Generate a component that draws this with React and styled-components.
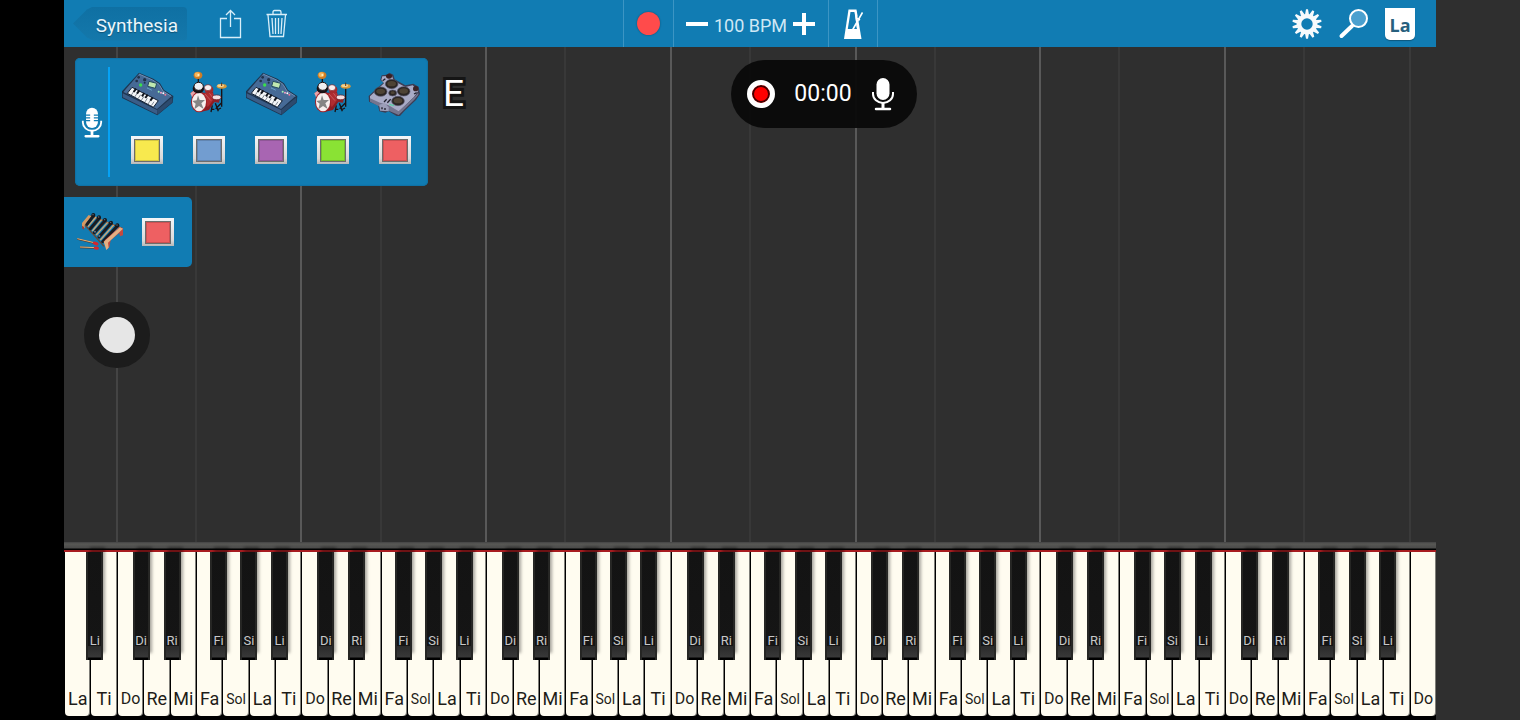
import React from 'react'
import styled, {createGlobalStyle} from 'styled-components'

const GlobalStyle = createGlobalStyle`
    * {
        box-sizing: border-box;
    }
    body {
        margin: 0;
        background: #2f2f2f;
        font-family: Roboto, "Liberation Sans", sans-serif;
    }
    button {
        margin: 0;
        padding: 0;
        border: 0;
        background: none;
        color: inherit;
        font: inherit;
        cursor: pointer;
    }
    svg {
        display: block;
    }
`

const Page = styled.div`
    min-height: 100vh;
    display: grid;
    grid-template-columns: 64px 1fr 84px;
    background: #2f2f2f;
    position: relative;
`
const Gutter = styled.div`
    background: #000;
`
const Screen = styled.main`
    min-width: 0;
    display: flex;
    flex-direction: column;
`

// top bar

const Toolbar = styled.header`
    height: 47px;
    display: grid;
    grid-template-columns: 1fr auto 1fr;
    background: #117cb3;
    color: #fff;
`
const Left = styled.div`
    display: flex;
    align-items: center;
    padding-left: 9px;
`
const Right = styled.div`
    display: flex;
    align-items: center;
    justify-content: flex-end;
    gap: 15px;
    padding-right: 21px;
`
const Back = styled.button`
    width: 114px;
    height: 34px;
    padding: 4px 9px 0 20px;
    margin-right: 31px;
    font-size: 19px;
    line-height: 24px;
    text-align: right;
    color: #eaf6fc;
    border-radius: 0 4px 4px 0;
    background: linear-gradient(#0f70a3, #1478ab);
    clip-path: polygon(0 50%, 14px 3px, 20px 0, 100% 0, 100% 100%, 20px 100%, 14px 31px);
    text-shadow: 0 1px 1px rgba(0,0,0,0.3);
`
const IconButton = styled.button`
    width: ${props => props.$width || 32}px;
    height: 32px;
    display: flex;
    align-items: center;
    justify-content: center;
`
const Share = styled(IconButton)`
    margin-right: 21px;
`
const Center = styled.div`
    display: flex;
`
const Cell = styled.div`
    display: flex;
    align-items: center;
    justify-content: center;
    width: ${props => props.$width}px;
    border-left: 1px solid #3c95c4;
    &:last-child {
        border-right: 1px solid #3c95c4;
    }
`
const RecordButton = styled.button`
    width: 23px;
    height: 23px;
    border-radius: 50%;
    background: #ff4b4b;
    box-shadow: 0 0 2px rgba(0,0,0,0.4);
`
const Tempo = styled.span`
    font-size: 18px;
    line-height: 22px;
    padding: 4px 6px 0 6px;
    color: #cfe8f5;
`
const LabelButton = styled.button`
    width: 30px;
    height: 32px;
    border-radius: 0 0 5px 5px;
    background: #fff;
    color: #27607e;
    font: 700 18px/34px "Open Sans", "Noto Sans", sans-serif;
    box-shadow: 0 1px 1px rgba(0,0,0,0.3);
`

// note area

const Stage = styled.section`
    flex: 1;
    display: grid;
    grid-template-columns: 1fr;
    grid-template-rows: 1fr;
    background: #2f2f2f;
    overflow: hidden;
`
const Roll = styled.div`
    grid-area: 1 / 1;
    display: grid;
    grid-template-columns: repeat(52, 1fr);
`
const Lane = styled.div`
    margin-left: -1px;
    border-left: ${props => props.$line ? `2px solid ${props.$line}` : '0'};
`
const Tracks = styled.div`
    grid-area: 1 / 1;
    display: flex;
    flex-direction: column;
    align-items: flex-start;
    gap: 11px;
    padding-top: 11px;
`
const TrackRow = styled.div`
    display: flex;
    padding-left: 11px;
`
const Panel = styled.div`
    display: flex;
    width: 353px;
    height: 128px;
    border-radius: 5px;
    background: #117cb3;
    box-shadow: inset 0 0 1px 1px #1072a5;
`
const MicCell = styled.button`
    width: 33px;
    display: flex;
    align-items: center;
    justify-content: center;
`
const Divider = styled.div`
    width: 2px;
    margin: 9px 6px 9px 0;
    background: #05a2f5;
`
const Track = styled.div`
    width: 62px;
    padding-top: 8px;
    display: flex;
    flex-direction: column;
    align-items: center;
    gap: 16px;
`
const Swatch = styled.button`
    width: 32px;
    height: 28px;
    padding: 3px 3px 4px;
    background: linear-gradient(#f4f6f8, #d9d9d9 80%, #b8b8b8);
    &::before {
        content: "";
        display: block;
        height: 100%;
        border: 1px solid #6c6c6c;
        box-shadow: inset 0 0 0 1px rgba(0,0,0,0.15);
        background: ${props => props.$color};
    }
`
const Mode = styled.span`
    margin: 14px 0 0 15px;
    font-size: 37px;
    line-height: 44px;
    color: #fff;
    -webkit-text-stroke: 6px #151515;
    paint-order: stroke fill;
`
const SmallPanel = styled.div`
    width: 128px;
    height: 70px;
    padding: 0 18px 0 8px;
    display: flex;
    align-items: center;
    justify-content: space-between;
    border-radius: 0 5px 5px 0;
    background: #117cb3;
`
const Stick = styled.button`
    width: 66px;
    height: 66px;
    margin: 24px 0 0 20px;
    border-radius: 50%;
    border: 15px solid #1c1c1c;
    background: #1c1c1c;
    &::before {
        content: "";
        display: block;
        height: 36px;
        border-radius: 50%;
        background: #e6e6e6;
    }
`
const Recorder = styled.div`
    position: absolute;
    top: 60px;
    left: 731px;
    width: 186px;
    height: 68px;
    padding: 0 22px 0 16px;
    display: flex;
    align-items: center;
    justify-content: space-between;
    border-radius: 34px;
    background: rgba(10,10,10,0.95);
    color: #fff;
    font-size: 23px;
    line-height: 28px;
`
const StopButton = styled.button`
    width: 28px;
    height: 28px;
    border-radius: 50%;
    border: 5px solid #fff;
    background: #f00;
    box-shadow: inset 0 0 0 2px #400;
`

// keyboard

const Rail = styled.div`
    height: 10px;
    background: linear-gradient(#444 0, #585855 2px, #4b4b4a 6px, #000 7px, #000 8px, #a81c20 8px);
`
const Keyboard = styled.div`
    height: 168px;
    padding: 0 0 4px;
    display: grid;
    grid-template-columns: repeat(52, 1fr);
    background: #000;
`
const Slot = styled.div`
    position: relative;
    display: flex;
`
const WhiteKey = styled.button`
    flex: 1;
    min-width: 0;
    margin-left: 1px;
    border-radius: 0 0 4px 4px;
    display: flex;
    align-items: flex-end;
    justify-content: center;
    padding-bottom: 6px;
    background: #fffcf0;
    box-shadow: inset -1px 0 0 rgba(0,0,0,0.5);
    color: #1e1c18;
    font-size: ${props => props.$size}px;
    line-height: 22px;
    white-space: nowrap;
`
const BlackKey = styled.button`
    position: absolute;
    z-index: 1;
    top: 0;
    left: ${props => props.$at}%;
    width: 17px;
    height: 108px;
    margin-left: -9px;
    display: flex;
    align-items: flex-end;
    justify-content: center;
    padding-bottom: 11px;
    background: linear-gradient(#131313 0, #151515 94px, #2a2a2a 94px, #383838 105px, #000 106px);
    border: 0 solid #262624;
    border-width: 0 2px;
    box-shadow: 3px -6px 3px -1px rgba(0,0,0,0.35);
    color: #c8c8c8;
    font-size: 13px;
    line-height: 16px;
    white-space: nowrap;
`

const SIZES = {Do: 16, Sol: 14}
const SCALE = ['Do', 'Re', 'Mi', 'Fa', 'Sol', 'La', 'Ti']

// name of the sharp above each white key and where its middle falls, in % of the key
const SHARPS = {
    Do: {name: 'Di', at: 94},
    Re: {name: 'Ri', at: 112},
    Fa: {name: 'Fi', at: 88},
    Sol: {name: 'Si', at: 103},
    La: {name: 'Li', at: 119},
}

const KEYS = Array.from({length: 52}, (_, i) => SCALE[(i + 5) % 7])

const laneColor = (note, i) => {
    if (note === 'Do') {
        if (i === 2) return '#444'
        return i === 51 ? '#3a3a3a' : '#595959'
    }
    return note === 'Fa' ? '#383838' : null
}

const Synth = () => (
    <svg width="60" height="54" viewBox="-3 0 180 162">
        <path d="M12 76L63 20L106 38L126 52L138 72L166 90L164 110L118 148L12 96Z" fill="#1e3550"/>
        <path d="M16 78L63 24L104 42L123 55L135 75L160 91L117 129Z" fill="#466a96"/>
        <path d="M63 24L104 42L123 55L135 75L160 91" fill="none" stroke="#6d8fb5" strokeWidth="3"/>
        <path d="M14 82L117 132V145L14 94Z" fill="#3a5d88"/>
        <path d="M117 132L163 94V109L118 146Z" fill="#2c4a6e"/>
        <path d="M42 64L121 104L106 124L28 82Z" fill="#f4f6f8" stroke="#142033" strokeWidth="3"/>
        <path d="M40 87l8-12M50 93l8-12M60 98l8-12M70 103l8-12M80 109l8-12M90 114l8-12M100 119l8-12" stroke="#45505f" strokeWidth="2"/>
        <path d="M47 78l7-10M57 83l7-10M72 91l7-10M82 96l7-10M97 104l7-10" stroke="#10141c" strokeWidth="6"/>
        <path d="M93 46L116 52L112 67L89 61Z" fill="#c0e8b0" stroke="#254c5e" strokeWidth="3"/>
        <circle cx="68" cy="57" r="5" fill="#39e04b"/>
        <g fill="#203149">
            <circle cx="62" cy="34" r="4"/>
            <circle cx="80" cy="41" r="5"/>
            <circle cx="56" cy="45" r="4"/>
            <circle cx="80" cy="50" r="3"/>
        </g>
        <path d="M88 66l14 7" stroke="#7fd0e8" strokeWidth="3" strokeDasharray="4 3"/>
        <circle cx="122" cy="77" r="3" fill="#9ff0b0"/>
        <circle cx="129" cy="80" r="3" fill="#f5a0c5"/>
        <circle cx="136" cy="82" r="3" fill="#fff"/>
        <circle cx="142" cy="86" r="3" fill="#f07898"/>
    </svg>
)

const Drums = () => (
    <svg width="50" height="54" viewBox="3 0 150 162">
        <path d="M46 34V58M116 62V122M88 118L84 138M97 112L106 136M116 110L98 128M84 130H94M102 132L114 126" stroke="#1a1114" strokeWidth="4" fill="none"/>
        <path d="M24 80L34 72L62 80L90 78L94 108L78 132L52 138Z" fill="#8c1c22"/>
        <path d="M60 82L90 80L94 98L74 124Z" fill="#b02c30"/>
        <path d="M66 84L84 104M78 80L90 96" stroke="#c85a5c" strokeWidth="3"/>
        <path d="M22 82L32 74L42 80L28 96Z" fill="#e7a3a8"/>
        <ellipse cx="48" cy="108" rx="24" ry="31" fill="#a32229"/>
        <ellipse cx="48" cy="108" rx="21" ry="28" fill="#f6efee"/>
        <path d="M45 88l5 14 16 0-11 10 7 17-14-9-14 10 4-17-10-8 13-2z" fill="#858585"/>
        <ellipse cx="46" cy="68" rx="17" ry="14" fill="#1a1114"/>
        <ellipse cx="47" cy="61" rx="14" ry="12" fill="#f1eff2" stroke="#1a1114" strokeWidth="3"/>
        <ellipse cx="78" cy="71" rx="13" ry="11" fill="#a52a2d"/>
        <ellipse cx="75" cy="65" rx="11" ry="9" fill="#f7eeee" stroke="#7d181d" strokeWidth="2"/>
        <path d="M88 94L112 92L108 110L90 108Z" fill="#8d2027"/>
        <ellipse cx="101" cy="94" rx="13" ry="7" fill="#f4dfe2" stroke="#621419" strokeWidth="2"/>
        <ellipse cx="45" cy="28" rx="13" ry="11" fill="#d07d25"/>
        <ellipse cx="43" cy="26" rx="8" ry="7" fill="#f3b65c"/>
        <circle cx="46" cy="27" r="3" fill="#fff2c8"/>
        <ellipse cx="116" cy="61" rx="15" ry="7" fill="#d89a3c"/>
        <ellipse cx="113" cy="59" rx="10" ry="4" fill="#f5d391"/>
        <path d="M116 50V60" stroke="#5e3413" strokeWidth="3"/>
    </svg>
)

const Pads = () => (
    <svg width="60" height="54" viewBox="3 0 180 162">
        <path d="M14 90L40 66L58 50L49 42L53 28L68 26L76 20L88 26L92 40L124 58L148 53L164 62L168 84L156 102L122 134L108 150L98 150L74 136L64 140L46 136L42 118L15 107Z" fill="#3c3d54"/>
        <path d="M18 91L60 52L52 42L55 31L84 30L89 44L124 63L146 58L163 74L150 93L104 137L74 122L47 116L18 103Z" fill="#a9abc6"/>
        <path d="M18 97L48 110L74 118L104 136L151 93L163 80V86L151 101L104 147L74 134L48 122L18 107Z" fill="#74758f"/>
        <path d="M46 116L62 112L74 124V136L48 134Z" fill="#9b9db8"/>
        <g fill="#2b2523" stroke="#56546a" strokeWidth="2">
            <ellipse cx="83" cy="54" rx="19" ry="14"/>
            <ellipse cx="50" cy="77" rx="19" ry="14"/>
            <ellipse cx="119" cy="76" rx="19" ry="14"/>
            <ellipse cx="102" cy="105" rx="19" ry="14"/>
            <ellipse cx="86" cy="81" rx="12" ry="9"/>
        </g>
        <g fill="#4e4335">
            <ellipse cx="83" cy="53" rx="13" ry="8"/>
            <ellipse cx="50" cy="76" rx="13" ry="8"/>
            <ellipse cx="119" cy="75" rx="13" ry="8"/>
            <ellipse cx="102" cy="104" rx="13" ry="8"/>
            <ellipse cx="86" cy="80" rx="6" ry="4"/>
        </g>
        <ellipse cx="75" cy="31" rx="9" ry="7" fill="#3a2020"/>
        <ellipse cx="155" cy="68" rx="8" ry="8" fill="#3a2428"/>
        <path d="M60 108l8-8M70 110l10-10M56 44l8-6M150 84l8-4M54 124v6M63 126v6" stroke="#20202c" strokeWidth="4"/>
        <path d="M76 115l14 4" stroke="#5ad1a4" strokeWidth="4"/>
    </svg>
)

const Xylophone = () => (
    <svg width="60" height="54" viewBox="0 0 180 162">
        <path d="M34 54L96 124" stroke="#6e4630" strokeWidth="4"/>
        <path d="M56 32L150 70" stroke="#6e4630" strokeWidth="4"/>
        <path d="M30 54L50 30L58 34L38 60V70L30 66Z" fill="#d79a62"/>
        <path d="M30 62L36 66V74L30 70Z" fill="#a33a32"/>
        <g stroke="#1a1b20" strokeWidth="9" strokeLinecap="round">
            <path d="M65 32L45 58"/>
            <path d="M82 39L55 71"/>
            <path d="M99 47L67 83"/>
            <path d="M117 55L81 96"/>
            <path d="M136 63L92 110"/>
        </g>
        <g stroke="#d3a671" strokeWidth="4">
            <path d="M72 36L48 65"/>
            <path d="M89 44L61 78"/>
            <path d="M107 52L73 90"/>
            <path d="M125 60L85 105"/>
        </g>
        <g fill="#15161a">
            <circle cx="64" cy="30" r="6"/>
            <circle cx="81" cy="37" r="6"/>
            <circle cx="99" cy="45" r="6"/>
            <circle cx="117" cy="53" r="6"/>
            <circle cx="136" cy="61" r="6"/>
        </g>
        <g fill="#64748a">
            <circle cx="63" cy="29" r="2"/>
            <circle cx="80" cy="36" r="2"/>
            <circle cx="98" cy="44" r="2"/>
            <circle cx="116" cy="52" r="2"/>
            <circle cx="135" cy="60" r="2"/>
            <circle cx="69" cy="80" r="3"/>
            <circle cx="82" cy="93" r="3"/>
        </g>
        <path d="M98 106L142 66L153 70V91L144 94L142 84L116 106L112 126L103 134Z" fill="#c4493f"/>
        <path d="M95 110L144 67L153 71L108 113L110 128L103 135Z" fill="#e3b083"/>
        <path d="M16 102L66 114M24 127L72 129" stroke="#5d3824" strokeWidth="5"/>
        <path d="M16 101L66 113M24 126L72 128" stroke="#e0b27c" strokeWidth="3"/>
        <path d="M67 114L75 117M70 129L76 130" stroke="#d3262b" strokeWidth="9" strokeLinecap="round"/>
    </svg>
)

const Gear = () => (
    <svg width="32" height="32" viewBox="-16 -16 32 32">
        <circle r="8" fill="none" stroke="#f7fafc" strokeWidth="4.600"/>
        {Array.from({length: 14}, (_, i) => (
            <path key={i} d="M-2 -9.500L-1 -14.700H1L2 -9.500Z" fill="#f7fafc" transform={`rotate(${i * 360 / 14})`}/>
        ))}
    </svg>
)

const Loupe = () => (
    <svg width="32" height="32" viewBox="0 0 32 32">
        <path d="M14 18L3.500 28" stroke="#fff" strokeWidth="4" strokeLinecap="round"/>
        <circle cx="20.500" cy="10.500" r="8.500" fill="#4aa0cf" stroke="#fff" strokeWidth="2"/>
    </svg>
)

const ShareIcon = () => (
    <svg width="24" height="32" viewBox="0 0 24 32" fill="none" stroke="#d8eef9" strokeWidth="1.300">
        <path d="M8 10.500H1.500V29.500H21.500V10.500H15"/>
        <path d="M11.500 19V2.500M7 7L11.500 2.500L16 7"/>
    </svg>
)

const TrashIcon = () => (
    <svg width="24" height="32" viewBox="0 0 24 32" fill="none" stroke="#d8eef9" strokeWidth="1.300">
        <path d="M1.500 6.500H22M8 6.500V4Q8 2.500 9.500 2.500H14.500Q16 2.500 16 4V6.500"/>
        <path d="M3 7L5 28.500H18.500L20.500 7"/>
        <path d="M7 10L8 26M10.500 10V26M13.500 10V26M17 10L16 26"/>
    </svg>
)

const Metronome = () => (
    <svg width="20" height="32" viewBox="0 0 20 32">
        <path d="M1 31L5.500 1.500H13.500L18.500 31Z" fill="#fff"/>
        <path d="M7.500 4H11.500L14 21H4.800Z" fill="#117cb3"/>
        <path d="M19 5L15 12" stroke="#117cb3" strokeWidth="4"/>
        <path d="M19.500 4.500L9.500 22M13.500 10L17 12" stroke="#fff" strokeWidth="1.600"/>
        <path d="M12.500 3L15 22" stroke="#fff" strokeWidth="1.800"/>
    </svg>
)

const Mic = ({striped}) => (
    <svg width={striped ? 22 : 24} height={striped ? 33 : 34} viewBox="0 0 24 34" fill="none" stroke="#fff">
        <rect x="5.500" y="1" width="13" height="22" rx="6.500" fill="#fff" stroke="none"/>
        {striped && <path d="M5 9H10M14 9H19M5 12H10M14 12H19M5 15H10M14 15H19" stroke="#117cb3" strokeWidth="1.200"/>}
        <path d="M2 15V17A10 9 0 0 0 22 17V15" strokeWidth="2"/>
        <path d="M12 26V31" strokeWidth="3"/>
        <path d="M5 32H19" strokeWidth="2.500" strokeLinecap="round"/>
    </svg>
)

const tracks = [
    {name: 'Synth 1', icon: Synth, color: '#f8e94e'},
    {name: 'Drums 1', icon: Drums, color: '#729dd0'},
    {name: 'Synth 2', icon: Synth, color: '#a865b2'},
    {name: 'Drums 2', icon: Drums, color: '#8ae234'},
    {name: 'Pads', icon: Pads, color: '#ee6062'},
]

const App = () => {
    return (
        <Page>
            <GlobalStyle/>
            <Gutter/>
            <Screen>
                <Toolbar>
                    <Left>
                        <Back>Synthesia</Back>
                        <Share $width={26} aria-label="Share"><ShareIcon/></Share>
                        <IconButton $width={24} aria-label="Delete"><TrashIcon/></IconButton>
                    </Left>
                    <Center>
                        <Cell $width={50}><RecordButton aria-label="Record"/></Cell>
                        <Cell $width={155}>
                            <button aria-label="Slower">
                                <svg width="22" height="22"><path d="M0 11H22" stroke="#fff" strokeWidth="4"/></svg>
                            </button>
                            <Tempo>100 BPM</Tempo>
                            <button aria-label="Faster">
                                <svg width="22" height="22"><path d="M0 11H22M11 0V22" stroke="#fff" strokeWidth="4"/></svg>
                            </button>
                        </Cell>
                        <Cell $width={50}>
                            <IconButton aria-label="Metronome"><Metronome/></IconButton>
                        </Cell>
                    </Center>
                    <Right>
                        <IconButton aria-label="Settings"><Gear/></IconButton>
                        <IconButton aria-label="Search"><Loupe/></IconButton>
                        <LabelButton>La</LabelButton>
                    </Right>
                </Toolbar>

                <Stage>
                    <Roll>
                        {KEYS.map((note, i) => <Lane key={i} $line={laneColor(note, i)}/>)}
                    </Roll>
                    <Tracks>
                        <TrackRow>
                            <Panel>
                                <MicCell aria-label="Microphone"><Mic striped/></MicCell>
                                <Divider/>
                                {tracks.map(({name, icon: Icon, color}) => (
                                    <Track key={name}>
                                        <Icon/>
                                        <Swatch $color={color} aria-label={name}/>
                                    </Track>
                                ))}
                            </Panel>
                            <Mode>E</Mode>
                        </TrackRow>
                        <SmallPanel>
                            <Xylophone/>
                            <Swatch $color="#ee6062" aria-label="Xylophone"/>
                        </SmallPanel>
                        <Stick aria-label="Move"/>
                    </Tracks>
                </Stage>

                <Rail/>
                <Keyboard>
                    {KEYS.map((note, i) => {
                        const sharp = i < 51 && SHARPS[note]
                        return (
                            <Slot key={i}>
                                <WhiteKey $size={SIZES[note] || 18}>{note}</WhiteKey>
                                {sharp && <BlackKey $at={sharp.at}>{sharp.name}</BlackKey>}
                            </Slot>
                        )
                    })}
                </Keyboard>
            </Screen>
            <Recorder>
                <StopButton aria-label="Stop recording"/>
                <span>00:00</span>
                <Mic/>
            </Recorder>
        </Page>
    )
}

export default App
